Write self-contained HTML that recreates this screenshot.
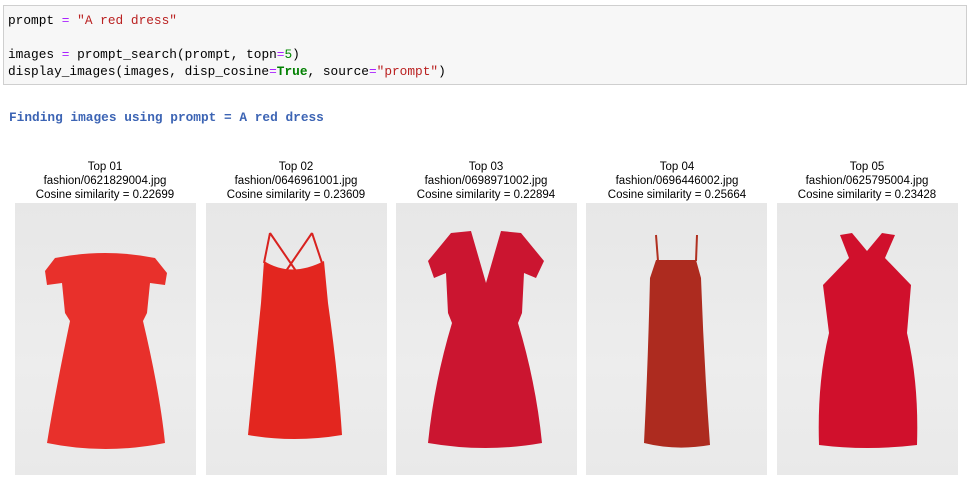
<!DOCTYPE html>
<html><head><meta charset="utf-8"><style>
body{margin:0;background:#fff;width:971px;height:487px;position:relative;overflow:hidden;font-family:"Liberation Sans",sans-serif}
.cell{position:absolute;left:3px;top:5px;width:964px;height:80px;background:#f7f7f7;border:1px solid #cfcfcf;box-sizing:border-box}
.code{position:absolute;left:8px;font-family:"Liberation Mono",monospace;font-size:12.8px;color:#000;white-space:pre;line-height:17px}
.s{color:#ba2121}.o{color:#aa22ff}.n{color:#080}.k{color:#008000;font-weight:bold}
.find{position:absolute;left:9px;top:110px;font-family:"Liberation Mono",monospace;font-size:12.8px;font-weight:bold;color:#3c64b4;white-space:pre}
.cap{position:absolute;top:160px;width:200px;text-align:center;font-size:11.5px;line-height:14px;color:#000}
.img{position:absolute;top:203px;width:181px;height:272px;background:linear-gradient(#e7e7e7,#ededed 60%,#e9e9e9)}
.img svg{position:absolute;left:0;top:0}
</style></head><body>
<div class="cell"></div>
<div class="code" style="top:12px">prompt <span class="o">=</span> <span class="s">"A red dress"</span></div>
<div class="code" style="top:46px">images <span class="o">=</span> prompt_search(prompt, topn<span class="o">=</span><span class="n">5</span>)</div>
<div class="code" style="top:63px">display_images(images, disp_cosine<span class="o">=</span><span class="k">True</span>, source<span class="o">=</span><span class="s">"prompt"</span>)</div>
<div class="find">Finding images using prompt = A red dress</div>

<div class="cap" style="left:5px">Top 01<br>fashion/0621829004.jpg<br>Cosine similarity = 0.22699</div>
<div class="cap" style="left:196px">Top 02<br>fashion/0646961001.jpg<br>Cosine similarity = 0.23609</div>
<div class="cap" style="left:386px">Top 03<br>fashion/0698971002.jpg<br>Cosine similarity = 0.22894</div>
<div class="cap" style="left:577px">Top 04<br>fashion/0696446002.jpg<br>Cosine similarity = 0.25664</div>
<div class="cap" style="left:767px">Top 05<br>fashion/0625795004.jpg<br>Cosine similarity = 0.23428</div>

<div class="img" style="left:15px"><svg width="181" height="272"><path d="M40 55 Q90 45 140 55 L152 70 L150 82 L135 80 L132 110 L128 118 Q145 190 150 240 Q90 252 32 240 Q40 190 55 118 L50 110 L47 80 L32 82 L30 68 Z" fill="#e8302b"/></svg></div>
<div class="img" style="left:206px"><svg width="181" height="272"><path d="M64 30 L58 60 M106 30 L116 60 M64 30 L90 68 M106 30 L80 68" stroke="#d8221f" stroke-width="2" fill="none"/><path d="M58 58 Q85 75 118 58 L122 100 Q132 170 136 232 Q88 240 42 232 Q48 170 55 100 Z" fill="#e3261f"/></svg></div>
<div class="img" style="left:396px"><svg width="181" height="272"><path d="M55 30 L75 28 L90 80 L105 28 L125 30 L148 58 L140 75 L128 70 L126 110 L122 120 Q140 180 146 240 Q90 250 32 240 Q38 180 56 120 L52 110 L50 70 L38 75 L32 58 Z" fill="#cb1530"/></svg></div>
<div class="img" style="left:586px"><svg width="181" height="272"><path d="M70 32 L72 58 M111 32 L110 58" stroke="#b03020" stroke-width="2"/><path d="M70 57 L110 57 L115 75 Q118 160 124 242 Q90 248 58 240 Q62 160 64 75 Z" fill="#ad2b1f"/></svg></div>
<div class="img" style="left:777px"><svg width="181" height="272"><path d="M63 32 L75 30 L90 48 L105 30 L118 32 L108 55 L134 82 L130 130 Q142 180 140 242 Q90 248 42 242 Q40 180 52 130 L46 82 L72 55 Z" fill="#d0102c"/></svg></div>
</body></html>
